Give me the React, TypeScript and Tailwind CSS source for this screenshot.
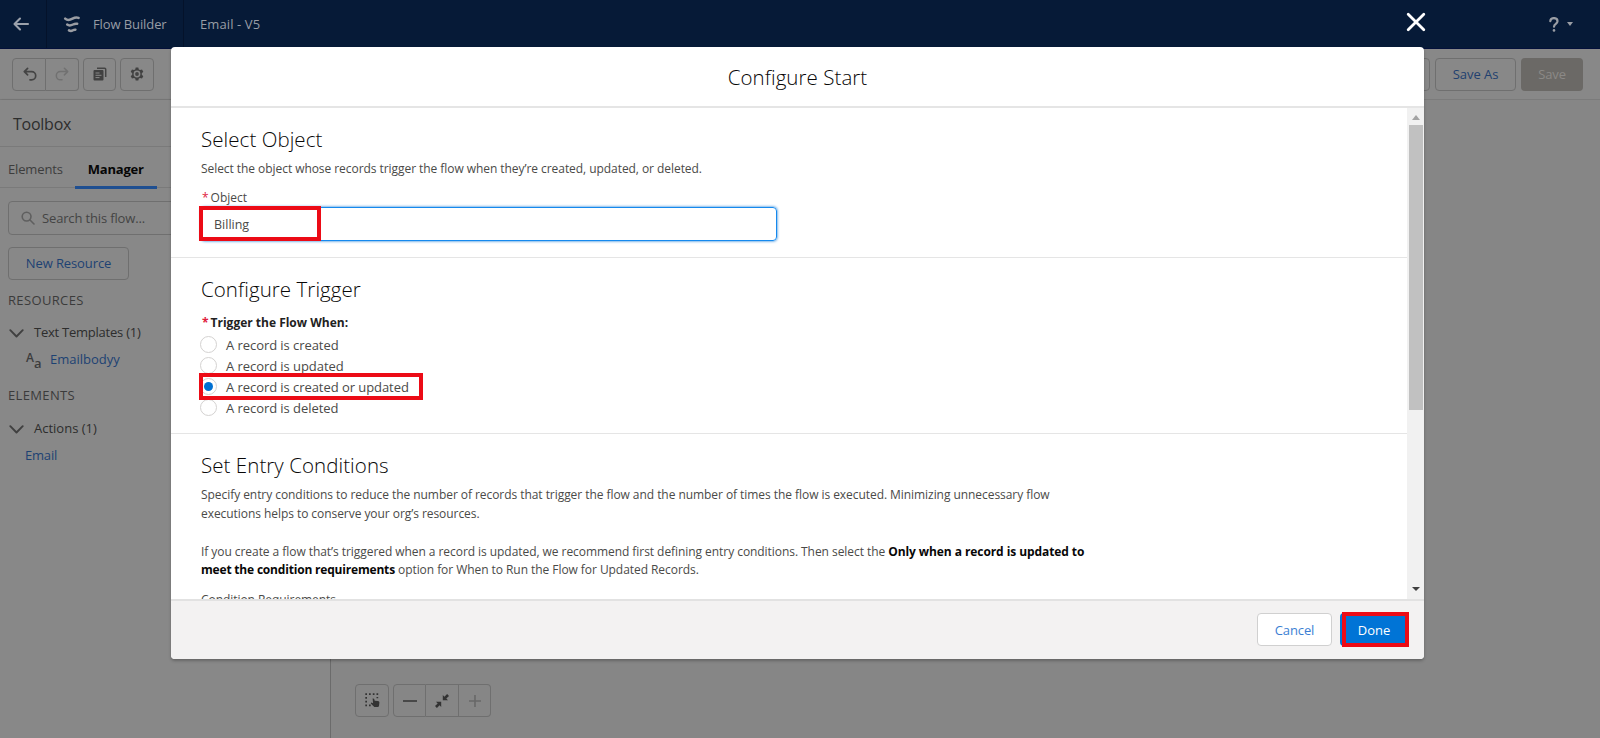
import React from "react";

type BoxProps = { className?: string; children?: React.ReactNode };

function IconBox({ className = "", children }: BoxProps) {
  return (
    <div className={`flex items-center justify-center border border-[#6f6f6f] ${className}`}>
      {children}
    </div>
  );
}

function TopBar() {
  return (
    <header className="flex h-[49px] shrink-0 items-stretch border-b border-[#03103a] bg-[#061a37] text-[13px] text-[#989da5]">
      <div className="flex w-[47px] items-center border-r border-[#04122a] pl-[13px]">
        <svg width="17" height="14" viewBox="0 0 17 14" fill="none" stroke="#9ba1ab" strokeWidth="2.1" strokeLinecap="round" strokeLinejoin="round">
          <path d="M15 7H2M7 1.5 1.5 7 7 12.5" />
        </svg>
      </div>
      <div className="flex w-[137px] items-center border-r border-[#04122a] pl-[16px]">
        <svg width="18" height="17" viewBox="0 0 18 17" fill="none" stroke="#9a9da3" strokeWidth="2.500" strokeLinecap="round">
          <path d="M2.200 2.600C4.500 4.800 7.500 3.800 9.500 2.700 11.500 1.600 13.500 1.100 15.600 1.900" />
          <path d="M4.200 8.600C6 10 8.500 9.300 10 8.500 11.500 7.700 12.700 7.400 14.200 7.800" />
          <path d="M6 14.400C7.500 15.400 9 14.900 10 14.300 10.800 13.800 11.500 13.600 12.400 13.700" />
        </svg>
        <span className="ml-[12px] whitespace-nowrap pt-[1px] tracking-[-0.1px]">Flow Builder</span>
      </div>
      <div className="flex items-center whitespace-nowrap pl-[16px] pt-[1px] tracking-[0.1px]">Email - V5</div>
      <div className="ml-auto flex items-center gap-[8px] pr-[27px]">
        <svg width="10" height="15" viewBox="0 0 10 15" fill="none" stroke="#999da4" strokeWidth="2.200" strokeLinecap="round">
          <path d="M1.300 4.200C1.500 0 8.500 0 8.500 4.300 8.500 6.800 5 6.800 5 9.700" />
          <path d="M5 13.300v.1" strokeWidth="2.600" />
        </svg>
        <svg width="6" height="4" viewBox="0 0 6 4" fill="#999da4">
          <path d="M0 0h6L3 4Z" />
        </svg>
      </div>
    </header>
  );
}

function Toolbar() {
  return (
    <div className="flex h-[51px] shrink-0 items-center border-b border-[#7b7b7b] bg-[#888888] pl-[12px] pr-[17px]">
      <IconBox className="h-[33px] w-[34px] rounded-l-[4px] pl-[1px]">
        <svg width="14" height="14" viewBox="0 0 14 14" fill="none" stroke="#444" strokeWidth="1.700" strokeLinecap="round" strokeLinejoin="round">
          <path d="M4.600 1.300 1.300 4.600l3.300 3.300M1.600 4.600h7a4.100 4.100 0 0 1 0 8.200H7" />
        </svg>
      </IconBox>
      <IconBox className="h-[33px] w-[33px] rounded-r-[4px] border-l-0">
        <svg width="14" height="14" viewBox="0 0 14 14" fill="none" stroke="#717171" strokeWidth="1.500" strokeLinecap="round" strokeLinejoin="round">
          <path d="M9.400 1.300 12.700 4.600 9.400 7.900M12.400 4.600h-7a4.100 4.100 0 0 0 0 8.200H7" />
        </svg>
      </IconBox>
      <IconBox className="ml-[4px] h-[33px] w-[33px] rounded-[4px]">
        <svg width="14" height="14" viewBox="0 0 14 14">
          <path d="M4 1.200h7.700q1 0 1 1V10" fill="none" stroke="#444" strokeWidth="1.500" />
          <rect x=".5" y="3" width="10" height="10.500" rx="1" fill="#404040" />
          <path d="M2.500 6h4M2.500 8.300h6M2.500 10.600h4" stroke="#888" strokeWidth="1" />
        </svg>
      </IconBox>
      <IconBox className="ml-[4px] h-[33px] w-[34px] rounded-[4px]">
        <svg width="14" height="14" viewBox="0 0 14 14">
          <path
            fillRule="evenodd"
            fill="#414141"
            d="M5.700.5h2.600l.5 1.900 1.200.7 2-.6 1.300 2.300-1.500 1.500v1.400l1.500 1.500-1.300 2.300-2-.6-1.200.7-.5 1.900H5.700l-.5-1.900-1.200-.7-2 .6L.7 9.200l1.500-1.500V6.300L.7 4.800 2 2.500l2 .6 1.200-.7ZM7 3.600a3.400 3.400 0 1 0 0 6.800 3.400 3.400 0 0 0 0-6.800Z"
          />
          <circle cx="7" cy="7" r="1.900" fill="#444" />
        </svg>
      </IconBox>
      <div className="ml-auto flex items-center gap-[5px] text-[13px]">
        <div className="h-[33px] w-[60px] rounded-[4px] border border-[#6f6f6f]" />
        <div className="flex h-[33px] w-[81px] items-center justify-center rounded-[4px] border border-[#6f6f6f] pt-[2px] tracking-[-0.05px] text-[#21406f]">
          Save As
        </div>
        <div className="flex h-[33px] w-[62px] items-center justify-center rounded-[4px] bg-[#6b6966] pt-[2px] tracking-[-0.1px] text-[#8b8987]">
          Save
        </div>
      </div>
    </div>
  );
}

function Chevron() {
  return (
    <svg className="mr-[10px]" width="15" height="9" viewBox="0 0 15 9" fill="none" stroke="#404040" strokeWidth="1.900" strokeLinecap="round" strokeLinejoin="round">
      <path d="M1.300 1.200 7.500 7.500 13.700 1.200" />
    </svg>
  );
}

function Sidebar() {
  return (
    <aside className="flex w-[331px] shrink-0 flex-col border-r border-[#6b6b6b] bg-[#888888] text-[13px] text-[#2d2d2d] shadow-[1px_0_2px_rgba(0,0,0,0.15)]">
      <div className="flex h-[47px] items-center border-b border-[#7a7a7a] pl-[13px] pt-[2px] text-[16px] tracking-[-0.250px]">Toolbox</div>
      <div className="flex h-[41px] items-stretch border-b border-[#7a7a7a] pl-[8px]">
        <div className="flex items-center pt-[5px] tracking-[-0.150px] text-[#3d3d3d]">Elements</div>
        <div className="-mb-[2px] ml-[12px] flex w-[82px] items-center justify-center border-b-[3px] border-[#1f4f91] pt-[6px] font-bold tracking-[-0.200px] text-[#060606]">
          Manager
        </div>
      </div>
      <div className="ml-[8px] mt-[13px] flex h-[34px] w-[300px] items-center rounded-[4px] border border-[#6f6f6f] pl-[12px] tracking-[-0.150px] text-[#444]">
        <svg className="mr-[7px]" width="14" height="14" viewBox="0 0 14 14" fill="none" stroke="#5f5f5f" strokeWidth="1.600" strokeLinecap="round">
          <circle cx="5.600" cy="5.600" r="4.400" />
          <path d="m9 9 4 4" />
        </svg>
        <span className="pt-[2px]">Search this flow...</span>
      </div>
      <div className="ml-[8px] mt-[12px] flex h-[33px] w-[121px] items-center justify-center rounded-[4px] border border-[#6f6f6f] tracking-[-0.1px] text-[#1d4273]">
        New Resource
      </div>
      <div className="mt-[11px] flex h-[20px] items-center pl-[8px] tracking-[0.350px] text-[#3b3b3b]">RESOURCES</div>
      <div className="mt-[12px] flex h-[20px] items-center pl-[9px]">
        <Chevron />
        <span className="tracking-[-0.240px]">Text Templates (1)</span>
      </div>
      <div className="mt-[7px] flex h-[20px] items-center pl-[26px] text-[#1d4273]">
        <span className="mr-[8px] flex w-[16px] items-end text-[#3c3c3c]">
          <span className="-mt-[5px] text-[12px] font-semibold leading-[16px]">A</span>
          <span className="-mb-[4px] text-[13px] font-semibold leading-[14px]">a</span>
        </span>
        <span>Emailbodyy</span>
      </div>
      <div className="mt-[16px] flex h-[20px] items-center pl-[8px] tracking-[0.350px] text-[#3b3b3b]">ELEMENTS</div>
      <div className="mt-[13px] flex h-[20px] items-center pl-[9px]">
        <Chevron />
        <span>Actions (1)</span>
      </div>
      <div className="mt-[7px] flex h-[20px] items-center pl-[25px] tracking-[-0.2px] text-[#1d4273]">Email</div>
    </aside>
  );
}

function CanvasControls() {
  return (
    <div className="flex">
      <IconBox className="h-[33px] w-[34px] rounded-[4px]">
        <svg width="15" height="15" viewBox="0 0 15 15">
          <path
            fill="#333"
            d="M.3.3h1.700v1.700H.3ZM4 .3h1.700v1.700H4ZM7.800.3h1.700v1.700H7.800ZM11.500.3h1.700v1.700h-1.700ZM.3 4h1.700v1.700H.3ZM.3 7.700h1.700v1.700H.3ZM.3 11.500h1.700v1.700H.3ZM4 11.500h1.700v1.700H4ZM11.500 4h1.700v1.300h-1.700Z"
          />
          <path fill="#333" d="M7.600 5.500q1.200-.4 1.600.6l.5 1.700 3.300.2q1.500.1 1.400 1.600L14 13q-.3 1-1.300 1H9.300L6 10.800q-.6-1 .5-1.300l1.600.7Z" />
        </svg>
      </IconBox>
      <IconBox className="ml-[4px] h-[33px] w-[33px] rounded-l-[4px]">
        <svg width="14" height="14" viewBox="0 0 14 14" stroke="#333" strokeWidth="1.500">
          <path d="M0 7h14" />
        </svg>
      </IconBox>
      <IconBox className="h-[33px] w-[33px] border-l-0">
        <svg width="14" height="14" viewBox="0 0 14 14">
          <path fill="#333" d="M7.800 1v5.200H13L11.300 4.600 14 1.900 12.100 0 9.400 2.700ZM6.200 13V7.800H1l1.700 1.600L0 12.100 1.900 14l2.700-2.700Z" />
        </svg>
      </IconBox>
      <IconBox className="h-[33px] w-[32px] rounded-r-[4px] border-l-0">
        <svg width="14" height="14" viewBox="0 0 14 14" stroke="#686868" strokeWidth="1.600">
          <path d="M1 7h12M7 1v12" />
        </svg>
      </IconBox>
    </div>
  );
}

function Radio({ label, checked = false }: { label: string; checked?: boolean }) {
  return (
    <div className={`relative flex h-[21px] items-center ${checked ? "z-10" : ""}`}>
      <span className="-ml-[1px] -mt-[3px] flex h-[17px] w-[17px] items-center justify-center rounded-full border border-[#d4d2d1] bg-white">
        {checked && <span className="h-[9px] w-[9px] rounded-full bg-[#0070d2]" />}
      </span>
      <span className="ml-[9px] tracking-[-0.060px]">{label}</span>
      {checked && <span className="absolute -left-[2px] -top-[4px] h-[27px] w-[224px] border-[4px] border-[#ec0b16]" />}
    </div>
  );
}

function Heading({ children }: BoxProps) {
  return <h2 className="h-[26px] text-[20.5px] font-[360] leading-[26px] tracking-[0.060px] text-[#080707]">{children}</h2>;
}

function Modal() {
  return (
    <section className="flex h-[612px] w-[1253px] flex-col overflow-hidden rounded-[4px] bg-white text-[12px] text-[#4a4a48] shadow-[0_2px_3px_rgba(0,0,0,0.25)]">
      <div className="flex h-[61px] shrink-0 items-center justify-center border-b-2 border-[#e5e5e5] pt-[2px] text-[20.5px] font-[360] tracking-[0.060px] text-[#080707]">
        Configure Start
      </div>
      <div className="flex min-h-0 flex-1">
        <div className="min-w-0 flex-1 overflow-hidden">
          <div className="h-[150px] border-b border-[#e5e5e5] pl-[30px] pt-[18px]">
            <Heading>Select Object</Heading>
            <p className="mt-[8px] h-[18px] leading-[18px] tracking-[-0.057px]">
              Select the object whose records trigger the flow when they’re created, updated, or deleted.
            </p>
            <div className="mt-[11px] flex h-[18px] items-center gap-[2px] pl-[1px]">
              <span className="text-[#e0203c]">*</span>
              <span>Object</span>
            </div>
            <div className="relative flex h-[34px] w-[576px] items-center rounded-[4px] border border-[#1589ee] pl-[12px] pt-[2px] text-[12.5px] shadow-[0_0_3px_#0070d2]">
              Billing
              <span className="absolute -left-[3px] -top-[2px] h-[35px] w-[122px] border-[4px] border-[#ec0b16]" />
            </div>
          </div>
          <div className="h-[176px] border-b border-[#e5e5e5] pl-[30px] pt-[18px]">
            <Heading>Configure Trigger</Heading>
            <div className="mt-[12px] flex h-[18px] items-center gap-[2px] pl-[1px] font-bold">
              <span className="text-[#e0203c]">*</span>
              <span className="text-[#222]">Trigger the Flow When:</span>
            </div>
            <div className="mt-[3px] text-[13px]">
              <Radio label="A record is created" />
              <Radio label="A record is updated" />
              <Radio label="A record is created or updated" checked />
              <Radio label="A record is deleted" />
            </div>
          </div>
          <div className="pl-[30px] pt-[18px]">
            <Heading>Set Entry Conditions</Heading>
            <p className="mt-[8px] whitespace-nowrap leading-[18.850px] tracking-[-0.057px]">
              Specify entry conditions to reduce the number of records that trigger the flow and the number of times the flow is executed. Minimizing unnecessary flow
              <br />
              executions helps to conserve your org’s resources.
              <br />
              <br />
              If you create a flow that’s triggered when a record is updated, we recommend first defining entry conditions. Then select the{" "}
              <b className="tracking-[-0.080px] text-[#080707]">Only when a record is updated to</b>
              <br />
              <b className="tracking-[-0.190px] text-[#080707]">meet the condition requirements</b> option for When to Run the Flow for Updated Records.
            </p>
            <p className="mt-[11px] leading-[18px] tracking-[-0.057px]">Condition Requirements</p>
          </div>
        </div>
        <div className="flex w-[17px] shrink-0 flex-col items-center bg-[#f1f1f1]">
          <svg className="mt-[7px] shrink-0" width="8" height="5" viewBox="0 0 8 5" fill="#a3a3a3">
            <path d="M4 0 8 5H0Z" />
          </svg>
          <div className="mt-[5px] h-[285px] w-[14px] shrink-0 bg-[#c1c1c1]" />
          <svg className="mb-[8px] mt-auto shrink-0" width="8" height="4" viewBox="0 0 8 4" fill="#404040">
            <path d="M0 0h8L4 4Z" />
          </svg>
        </div>
      </div>
      <div className="flex h-[60px] shrink-0 items-start justify-end border-t-2 border-[#e2e2e2] bg-[#f3f2f2] pr-[17px] pt-[12px] text-[13px]">
        <div className="flex h-[33px] w-[75px] items-center justify-center rounded-[4px] border border-[#d0d0d0] bg-white pt-[2px] tracking-[-0.1px] text-[#3b7fd4]">
          Cancel
        </div>
        <div className="relative ml-[8px] flex h-[33px] w-[67px] items-center justify-center rounded-[4px] bg-[#0074d6] pl-[1px] pt-[2px] text-white">
          Done
          <span className="absolute -top-[1px] left-[2px] h-[35px] w-[67px] border-[4px] border-[#ec0b16]" />
        </div>
      </div>
    </section>
  );
}

export default function App() {
  return (
    <div className="relative flex h-[738px] w-[1600px] flex-col overflow-hidden bg-[#858585] font-['Open_Sans','Noto_Sans',sans-serif]">
      <TopBar />
      <Toolbar />
      <div className="flex min-h-0 flex-1">
        <Sidebar />
        <main className="flex flex-1 items-end bg-[#868686] pb-[21px] pl-[24px]">
          <CanvasControls />
        </main>
      </div>
      <div className="absolute left-[171px] top-[47px]">
        <Modal />
      </div>
      <svg className="absolute left-[1406px] top-[12px]" width="20" height="20" viewBox="0 0 20 20" fill="none" stroke="#fff" strokeWidth="2.800" strokeLinecap="round">
        <path d="m2.200 2.200 15.600 15.600M17.800 2.200 2.200 17.800" />
      </svg>
    </div>
  );
}
